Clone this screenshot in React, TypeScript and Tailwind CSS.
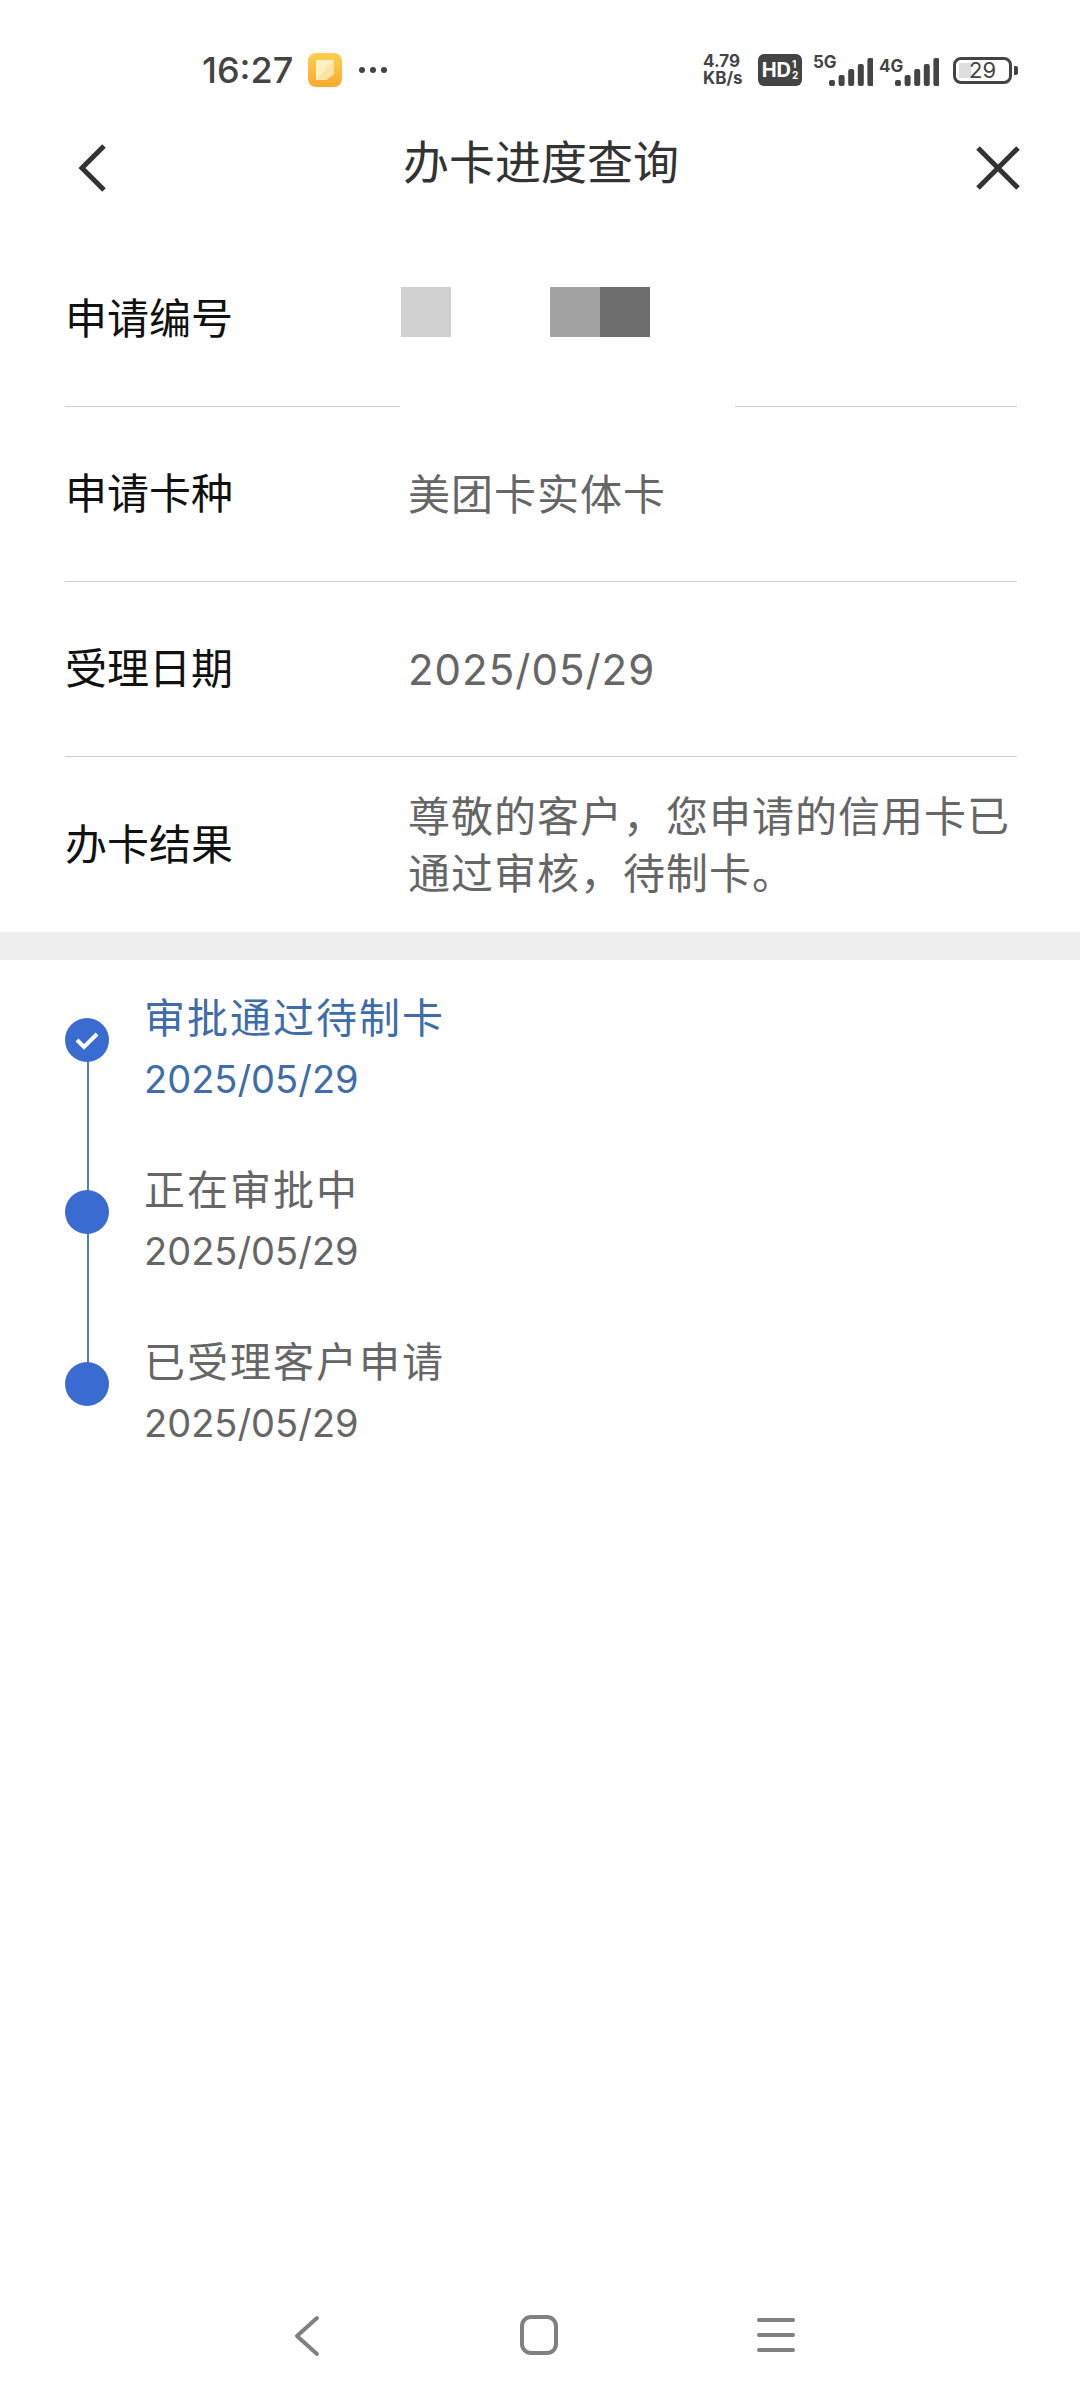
import React from 'react';

const FONT = 'font-["Inter","Noto_Sans_CJK_SC",sans-serif]';

const Signal = ({ bars }: { bars: number[] }) => (
  <svg width="44" height="30" viewBox="0 0 44 30" className="text-[#444]">
    {bars.map((h, i) => (
      <rect key={i} x={i * 9.6} y={30 - h} width="6" height={h} rx="2" fill="currentColor" />
    ))}
  </svg>
);

const StatusBar = () => (
  <div className="h-[140px] flex items-center pl-[202px] pr-[62px] shrink-0">
    <span className="text-[36px] text-[#444] font-medium w-[86px] leading-none">16:27</span>
    <svg width="36" height="36" viewBox="0 0 36 36" className="ml-[19px]">
      <defs>
        <linearGradient id="note" x1="0" y1="0" x2="0" y2="1">
          <stop offset="0" stopColor="#fbd04f" />
          <stop offset="1" stopColor="#fba92d" />
        </linearGradient>
      </defs>
      <rect x="1" y="1" width="34" height="34" rx="8" fill="url(#note)" />
      <path d="M9 8h18v14l-8 6H9z" fill="#fdeec4" />
      <path d="M27 8v14l-8 6H9z" fill="#fde2a0" />
    </svg>
    <div className="flex gap-[5px] ml-[16px]">
      <div className="w-[6px] h-[6px] rounded-full bg-[#444]" />
      <div className="w-[6px] h-[6px] rounded-full bg-[#444]" />
      <div className="w-[6px] h-[6px] rounded-full bg-[#444]" />
    </div>
    <div className="ml-auto flex items-center">
      <div className="flex flex-col w-[48px] text-[17px] leading-[17px] font-bold text-[#444]">
        <span>4.79</span>
        <span>KB/s</span>
      </div>
      <div className="ml-[7px] w-[44px] h-[32px] rounded-[6px] bg-[#444] text-white flex items-center justify-center">
        <span className="text-[20px] font-bold leading-none">HD</span>
        <span className="flex flex-col text-[10px] leading-[11px] font-bold ml-[1px]">
          <span>1</span>
          <span>2</span>
        </span>
      </div>
      <div className="ml-[11px] w-[60px] h-[32px] flex flex-col justify-between relative">
        <span className="text-[17px] leading-[17px] font-bold text-[#444]">5G</span>
        <div className="absolute left-[16px] bottom-0">
          <Signal bars={[6, 11, 17, 22, 28]} />
        </div>
      </div>
      <div className="ml-[6px] w-[60px] h-[32px] relative">
        <span className="text-[17px] leading-[17px] font-bold text-[#444]">4G</span>
        <div className="absolute left-[16px] bottom-0">
          <Signal bars={[6, 11, 17, 22, 28]} />
        </div>
      </div>
      <div className="ml-[14px] w-[59px] h-[27px] rounded-[8px] border-[3px] border-[#444] relative overflow-hidden flex items-center justify-center">
        <div className="absolute left-[3px] top-[3px] bottom-[3px] w-[12px] bg-[#ddd]" />
        <span className="relative text-[22px] leading-none text-[#444]">29</span>
      </div>
      <div className="ml-[2px] w-[4px] h-[9px] rounded-r-[2px] bg-[#444]" />
    </div>
  </div>
);

const Header = () => (
  <div className="h-[92px] shrink-0 pb-[36px] flex items-center justify-between pl-[76px] pr-[60px] relative">
    <svg width="32" height="50" viewBox="0 0 32 50" fill="none" stroke="#333" strokeWidth="5">
      <path d="M28 3 6 25l22 22" />
    </svg>
    <span className="absolute left-0 right-0 top-[-6px] text-center text-[46px] leading-[56px] text-[#333] pl-[2px]">办卡进度查询</span>
    <svg width="44" height="44" viewBox="0 0 44 44" fill="none" stroke="#333" strokeWidth="5">
      <path d="m2 2 40 40M42 2 2 42" />
    </svg>
  </div>
);

const InfoRow = ({ label, children, last }: { label: string; children: React.ReactNode; last?: boolean }) => (
  <div className={`h-[175px] flex items-center ${last ? '' : 'border-b border-[#ccc]'}`}>
    <span className="w-[343px] text-[42px] text-[#111] leading-none">{label}</span>
    <div className="flex-1 text-[42px] tracking-[1px] leading-[57px] text-[#666]">{children}</div>
  </div>
);

const TimelineItem = ({ title, active, check, last }: { title: string; active?: boolean; check?: boolean; last?: boolean }) => (
  <div className="h-[172px] flex relative">
    <div className="w-[44px] relative shrink-0 mt-[58px]">
      <div className="w-[44px] h-[44px] rounded-full bg-[#3a6bd0] flex items-center justify-center relative z-10">
        {check && (
          <svg width="26" height="20" viewBox="0 0 26 20" fill="none" stroke="#fff" strokeWidth="4">
            <path d="m3 10 7 7L23 4" />
          </svg>
        )}
      </div>
      {!last && <div className="absolute left-[22px] top-[22px] w-[2px] h-[172px] bg-[#5b7f9c]" />}
    </div>
    <div className={`ml-[35px] pt-[33px] ${active ? 'text-[#3f6cab]' : 'text-[#666]'}`}>
      <div className="text-[41px] tracking-[2px] leading-[50px]">{title}</div>
      <div className="text-[38px] leading-[46px] mt-[13px]">2025/05/29</div>
    </div>
  </div>
);

export default function App() {
  return (
    <div className={`w-[1080px] h-[2400px] bg-white flex flex-col overflow-hidden ${FONT}`}>
      <StatusBar />
      <Header />
      <div className="pl-[65px] pr-[63px]">
        <div className="relative">
          <InfoRow label="申请编号">
            <div className="flex -ml-[7px] h-[50px] -mt-[14px]">
              <div className="w-[50px] bg-[#d1d1d1]" />
              <div className="w-[99px]" />
              <div className="w-[50px] bg-[#a3a3a3]" />
              <div className="w-[50px] bg-[#6e6e6e]" />
            </div>
          </InfoRow>
          <div className="absolute left-[335px] top-[172px] w-[335px] h-[6px] bg-white" />
        </div>
        <InfoRow label="申请卡种">美团卡实体卡</InfoRow>
        <InfoRow label="受理日期">2025/05/29</InfoRow>
        <InfoRow label="办卡结果" last>尊敬的客户，您申请的信用卡已通过审核，待制卡。</InfoRow>
      </div>
      <div className="h-[28px] bg-[#eeeeee] shrink-0" />
      <div className="pl-[65px]">
        <TimelineItem title="审批通过待制卡" active check />
        <TimelineItem title="正在审批中" />
        <TimelineItem title="已受理客户申请" last />
      </div>
      <div className="mt-auto h-[108px] shrink-0 flex items-start pt-[23px] pl-[293px] pr-[285px] justify-between">
        <svg width="28" height="42" viewBox="0 0 28 42" fill="none" stroke="#808080" strokeWidth="4" strokeLinecap="round" strokeLinejoin="round">
          <path d="M24 3 4 21l20 18" />
        </svg>
        <svg width="38" height="40" viewBox="0 0 38 40" fill="none" stroke="#808080" strokeWidth="4">
          <rect x="2" y="2" width="34" height="36" rx="9" />
        </svg>
        <svg width="38" height="40" viewBox="0 0 38 40" fill="none" stroke="#808080" strokeWidth="4" strokeLinecap="round">
          <path d="M2 5h34M2 20h34M2 35h34" />
        </svg>
      </div>
    </div>
  );
}
